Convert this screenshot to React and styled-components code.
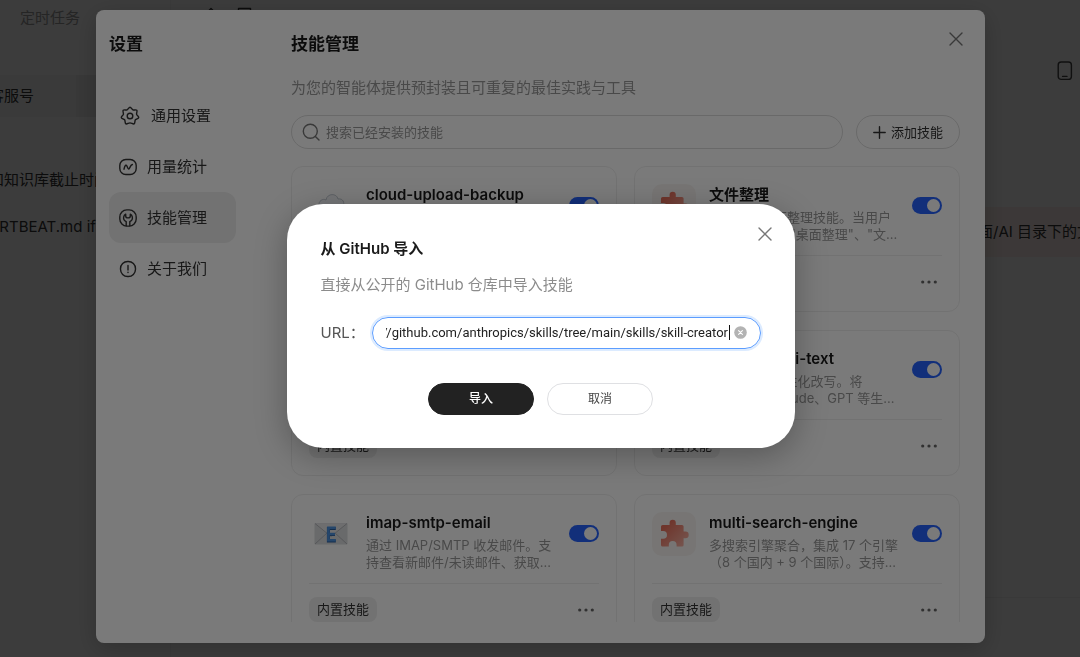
import React, { useLayoutEffect, useRef, useState } from "react";
import styled, { createGlobalStyle } from "styled-components";

const Global = createGlobalStyle`
  *, *::before, *::after { box-sizing: border-box; }
  html, body, #root { height: 100%; }
  body {
    margin: 0;
    overflow: hidden;
    background: #fafafa;
    color: #333;
    font-family: Inter, "Noto Sans CJK SC", sans-serif;
    font-size: 15px;
    line-height: 22px;
  }
  button, input { font: inherit; color: inherit; }
  button { cursor: pointer; padding: 0; border: 0; background: none; }
  h1, h2, h3, p, ul { margin: 0; padding: 0; }
  ul { list-style: none; }
`;

/* ---------- workspace behind the dialogs ---------- */

const Workspace = styled.div`
  display: flex;
  height: 100%;
  overflow: hidden;
`;

const TaskPane = styled.aside`
  flex: none;
  width: 171px;
  border-right: 1px solid #f0f0f0;
  overflow: hidden;
`;

const TaskLabel = styled.p`
  padding: 7px 20px 0;
  margin-bottom: 46px;
  color: #999;
`;

const ChatItem = styled.p`
  margin-left: -11px;
  height: 42px;
  line-height: 42px;
  white-space: nowrap;
  color: #333;
  background: ${(p) => (p.$active ? "linear-gradient(90deg, #f2f2f2 87px, #e8e8e8 87px)" : "none")};
  margin-bottom: ${(p) => p.$after || 0}px;
`;

const ChatPane = styled.main`
  flex: 1;
  min-width: 0;
  display: flex;
  flex-direction: column;
`;

const ChatTop = styled.div`
  display: flex;
  gap: 20px;
  height: 60px;
  padding: 7px 32px 0;
`;

const DeviceRow = styled.div`
  display: flex;
  justify-content: flex-end;
  height: 147px;
  padding-right: 7px;
  color: #444;
`;

const Bubble = styled.p`
  align-self: flex-end;
  width: 120px;
  height: 50px;
  padding-left: 18px;
  line-height: 50px;
  white-space: nowrap;
  overflow: hidden;
  background: #f8ebe8;
`;

const Composer = styled.div`
  margin-top: auto;
  height: 60px;
  border-top: 1px solid #eee;
`;

/* ---------- dialogs ---------- */

const Overlay = styled.div`
  position: fixed;
  inset: 0;
  display: flex;
  align-items: ${(p) => (p.$center ? "center" : "stretch")};
  justify-content: center;
  padding: ${(p) => (p.$center ? "10px 95px 16px 96px" : "10px 95px 14px 96px")};
  background: rgba(0, 0, 0, ${(p) => (p.$center ? 0.52 : 0.5)});
`;

const SettingsDialog = styled.section`
  position: relative;
  flex: 1;
  display: flex;
  min-width: 0;
  padding: 0 25px 21px 13px;
  border-radius: 8px;
  background: #fff;
  box-shadow: 0 6px 24px rgba(0, 0, 0, 0.2);
`;

const CloseButton = styled.button`
  position: absolute;
  top: ${(p) => p.$inset}px;
  right: ${(p) => p.$inset}px;
  display: flex;
  color: #777;
`;

const Side = styled.nav`
  flex: none;
  width: 127px;
  margin-right: 55px;
  padding-top: 23px;
`;

const Heading = styled.h1`
  font-size: 17px;
  line-height: 22px;
  font-weight: 600;
  color: #1a1a1a;
`;

const NavList = styled.ul`
  margin-top: 35px;
`;

const NavItem = styled.button`
  display: flex;
  align-items: center;
  gap: 10px;
  width: 100%;
  height: 51px;
  padding: 0 10px;
  border-radius: 12px;
  background: ${(p) => (p.$active ? "#efefef" : "none")};

  svg { flex: none; }
`;

const Content = styled.div`
  flex: 1;
  min-width: 0;
  display: flex;
  flex-direction: column;
  padding-top: 23px;
`;

const Lead = styled.p`
  margin-top: 22px;
  color: #999;
`;

const Tools = styled.div`
  display: flex;
  gap: 13px;
  margin: 16px 0 17px;
`;

const SearchBox = styled.label`
  flex: 1;
  display: flex;
  align-items: center;
  gap: 6px;
  height: 34px;
  padding: 0 10px;
  border: 1px solid #dcdcdc;
  border-radius: 17px;
  font-size: 13px;
  color: #777;

  input {
    flex: 1;
    min-width: 0;
    border: 0;
    padding: 0;
    outline: none;
    background: none;
  }
  input::placeholder { color: #999; opacity: 1; }
`;

const AddButton = styled.button`
  display: flex;
  align-items: center;
  justify-content: center;
  gap: 5px;
  width: 104px;
  height: 34px;
  border: 1px solid #dcdcdc;
  border-radius: 17px;
  font-size: 13px;
`;

const CardGrid = styled.div`
  flex: 1;
  min-height: 0;
  overflow: hidden;
  display: grid;
  grid-template-columns: repeat(2, minmax(0, 1fr));
  grid-auto-rows: 146px;
  gap: 18px 17px;
`;

const Card = styled.article`
  padding: 17px;
  border: 1px solid #efefef;
  border-radius: 12px;
`;

const CardTop = styled.div`
  display: flex;
  gap: 13px;
  height: 72px;
  border-bottom: 1px solid #efefef;

  svg { flex: none; }
`;

const CardText = styled.div`
  flex: 1;
  min-width: 0;
`;

const CardTitle = styled.h2`
  margin-bottom: 4px;
  font-size: 15px;
  line-height: 21px;
  font-weight: 600;
  color: #1a1a1a;
  white-space: nowrap;
`;

const CardLine = styled.p`
  font-size: 13px;
  line-height: 17px;
  color: #999;
  white-space: nowrap;
`;

const Switch = styled.input`
  appearance: none;
  flex: none;
  display: flex;
  align-items: center;
  width: 30px;
  height: 17px;
  margin: 13px 0 0;
  padding: 0 2px;
  border-radius: 9px;
  background: #bbb;

  &:checked {
    justify-content: flex-end;
    background: #2663ff;
  }
  &::before {
    content: "";
    width: 13px;
    height: 13px;
    border-radius: 50%;
    background: #fff;
  }
`;

const CardFoot = styled.div`
  display: flex;
  align-items: center;
  justify-content: space-between;
  margin-top: 13px;
  padding-right: 4px;
`;

const Tag = styled.span`
  height: 25px;
  padding: 0 8px;
  border-radius: 8px;
  font-size: 13px;
  line-height: 25px;
  background: #efefef;
`;

const MoreButton = styled.button`
  display: flex;
  color: #666;
`;

const ImportDialog = styled.form`
  position: relative;
  width: 508px;
  padding: 34px 34px 33px;
  border-radius: 36px;
  background: #fff;
  box-shadow: 0 8px 32px rgba(0, 0, 0, 0.28);
`;

const ImportTitle = styled.h3`
  margin-bottom: 14px;
  font-size: 15px;
  line-height: 22px;
  font-weight: 600;
  color: #1a1a1a;
`;

const Hint = styled.p`
  color: #8c8c8c;
`;

const Field = styled.div`
  display: flex;
  align-items: center;
  margin-top: 21px;

  label {
    flex: none;
    width: 51px;
    color: #555;
    white-space: nowrap;
  }
`;

const UrlBox = styled.div`
  flex: 1;
  min-width: 0;
  display: flex;
  align-items: center;
  height: 32px;
  padding: 0 13px;
  border: 1px solid #5c9dff;
  border-radius: 16px;
  box-shadow: 0 0 0 2px #dcebff;
  font-family: Roboto, "Noto Sans CJK SC", sans-serif;
  font-size: 13px;

  input {
    flex: 1;
    min-width: 0;
    height: 22px;
    padding: 0;
    border: 0;
    outline: none;
    background: none;
    color: #222;
    caret-color: transparent;
  }
`;

const Caret = styled.span`
  width: 1px;
  height: 15px;
  background: #111;
`;

const ClearButton = styled.button`
  display: flex;
  margin-left: 4px;
`;

const Actions = styled.div`
  display: flex;
  justify-content: center;
  gap: 13px;
  margin-top: 34px;
`;

const Action = styled.button`
  width: 106px;
  height: 32px;
  border: 1px solid ${(p) => (p.$primary ? "#222" : "#dfe0e3")};
  border-radius: 16px;
  background: ${(p) => (p.$primary ? "#222" : "#fff")};
  color: ${(p) => (p.$primary ? "#fff" : "#444")};
  font-size: 12px;
  font-weight: ${(p) => (p.$primary ? 500 : 400)};
`;

/* ---------- drawings ---------- */

const line = {
  fill: "none",
  stroke: "currentColor",
  strokeWidth: 1.4,
  strokeLinecap: "round",
  strokeLinejoin: "round",
};

const CloseIcon = () => (
  <svg width="14" height="14" viewBox="0 0 14 14" {...line}>
    <path d="M1 1l12 12M13 1L1 13" />
  </svg>
);

const GearIcon = () => (
  <svg width="22" height="22" viewBox="0 0 22 22" {...line}>
    <path d="M11 2.2 C12.2 2.2 12.6 4.3 13.9 4.9 C15.1 5.5 17.1 4.3 17.8 5.3 C18.6 6.2 17.3 7.9 17.6 9.3 C17.9 10.6 19.9 11.3 19.7 12.6 C19.4 13.8 17.3 13.7 16.4 14.8 C15.6 15.8 16.3 17.9 15.1 18.9 C14 19.4 12.4 17.9 11 17.9 C9.6 17.9 8 19.4 6.9 18.9 C5.7 17.9 6.4 15.8 5.6 14.8 C4.7 13.7 2.6 13.8 2.3 12.6 C2.1 11.3 4.1 10.6 4.4 9.3 C4.7 7.9 3.4 6.2 4.2 5.3 C4.9 4.3 6.9 5.5 8.1 4.9 C9.4 4.3 9.8 2.2 11 2.2 Z" />
    <circle cx="11" cy="11" r="2.8" />
  </svg>
);

const UsageIcon = () => (
  <svg width="18" height="18" viewBox="0 0 18 18" {...line}>
    <rect x="0.8" y="1.5" width="16.4" height="15" rx="6" />
    <path d="M5 11.2 C5.6 8.4 6.6 6.6 7.4 7.3 C8.3 8.1 8.7 11.4 9.8 11 C11 10.5 11 7.2 13.4 6.5" />
  </svg>
);

const SkillIcon = () => (
  <svg width="18" height="18" viewBox="0 0 18 18" {...line}>
    <rect x="0.8" y="0.9" width="16.4" height="16.2" rx="7" />
    <path d="M7.2 16.8 V12.6 C5.2 11.8 4.3 9.9 4.7 7.9 C5 6.6 5.8 5.7 6.7 5.2 V7 C6.7 8.1 7.8 8.9 9 8.9 C10.2 8.9 11.3 8.1 11.3 7 V5.2 C12.2 5.7 13 6.6 13.3 7.9 C13.7 9.9 12.8 11.8 10.8 12.6 V16.8" />
  </svg>
);

const AboutIcon = () => (
  <svg width="18" height="18" viewBox="0 0 18 18" {...line}>
    <rect x="1.5" y="1.5" width="15" height="15" rx="7.2" />
    <path d="M9 5.5v4.5M9 12.3v.2" />
  </svg>
);

const SearchIcon = () => (
  <svg width="18" height="18" viewBox="0 0 18 18" {...line}>
    <circle cx="8.3" cy="8.3" r="7" />
    <path d="M13.4 13.4L17 17" />
  </svg>
);

const PlusIcon = () => (
  <svg width="13" height="13" viewBox="0 0 13 13" {...line}>
    <path d="M6.5 .8v11.4M.8 6.5h11.4" />
  </svg>
);

const DotsIcon = () => (
  <svg width="18" height="6" viewBox="0 0 18 6" fill="currentColor">
    <circle cx="2.7" cy="3" r="1.6" />
    <circle cx="9" cy="3" r="1.6" />
    <circle cx="15.3" cy="3" r="1.6" />
  </svg>
);

const ClearIcon = () => (
  <svg width="13" height="13" viewBox="0 0 13 13">
    <circle cx="6.5" cy="6.5" r="6.3" fill="#b3b3b3" />
    <path d="M4.6 4.6l3.8 3.8M8.4 4.6L4.6 8.4" stroke="#fff" strokeWidth="1.1" strokeLinecap="round" />
  </svg>
);

const PhoneIcon = () => (
  <svg width="16" height="22" viewBox="0 0 16 22" {...line}>
    <rect x="1.2" y="2" width="13.2" height="17.4" rx="3" />
    <path d="M5.6 16.4h4.4" />
  </svg>
);

const TopIcons = () => (
  <svg width="60" height="18" viewBox="0 0 60 18" {...line}>
    <path d="M4 5.5L8 1.5l4 4M35.5 1.5h12v12h-12z" />
  </svg>
);

const PuzzleIcon = () => (
  <svg width="44" height="44" viewBox="0 0 44 44">
    <defs>
      <linearGradient id="puzzle" x1="0" y1="0" x2="1" y2="1">
        <stop offset="0.2" stopColor="#e8705c" />
        <stop offset="1" stopColor="#f7b9ac" />
      </linearGradient>
    </defs>
    <rect width="44" height="44" rx="10" fill="#f8f5f2" />
    <path
      fill="url(#puzzle)"
      d="M10.6 13 H17.6 V10.8 A3.1 3.1 0 0 1 23.8 10.8 V13 H30 A1.6 1.6 0 0 1 31.6 14.6 V19.6 H33.4 A3.3 3.3 0 0 1 33.4 26.2 H31.6 V32.9 A1.6 1.6 0 0 1 30 34.5 H24.6 V33 A3.9 3.9 0 0 0 16.8 33 V34.5 H10.6 A1.6 1.6 0 0 1 9 32.9 V26.7 H11.2 A3.8 3.8 0 0 0 11.2 19.1 H9 V14.6 A1.6 1.6 0 0 1 10.6 13 Z"
    />
  </svg>
);

const MailIcon = () => (
  <svg width="44" height="44" viewBox="0 0 44 44">
    <rect x="5.5" y="11" width="33" height="21.5" rx="1" fill="#dcdde0" />
    <path d="M6 11.5l16 13 16-13z" fill="#e6e7e9" />
    <path d="M6 11.5l16 13 16-13M6 32l12-11M38 32L26 21" fill="none" stroke="#b0b2b7" strokeWidth="0.9" />
    <path d="M26.8 16.5h-7.4v12.4h7.4M19.4 22.6h6.6" fill="none" stroke="#2c5f9e" strokeWidth="3" />
    <path d="M26.8 15.8h-7.4v12.4h7.4M19.4 22h6.6" fill="none" stroke="#4f93e0" strokeWidth="2.6" />
  </svg>
);

const CloudIcon = () => (
  <svg width="44" height="44" viewBox="0 0 44 44">
    <path
      d="M12 31 C6 31 5 24 10 22 C9 17 14 14 17 16 C18 9 28 9 29 15 C34 14 36 19 34 22 C39 24 38 31 32 31 Z"
      fill="#f3f5f8"
      stroke="#c4cad2"
      strokeWidth="1"
    />
  </svg>
);

/* ---------- data ---------- */

const NAV = [
  { label: "通用设置", Icon: GearIcon },
  { label: "用量统计", Icon: UsageIcon },
  { label: "技能管理", Icon: SkillIcon, active: true },
  { label: "关于我们", Icon: AboutIcon },
];

const SKILLS = [
  { title: "cloud-upload-backup", Icon: CloudIcon, lines: ["上传备份文件到云端。支持", "生成分享链接、下载文件..."] },
  { title: "文件整理", Icon: PuzzleIcon, lines: ["智能文件桌面整理技能。当用户", '提到 "整理"、"桌面整理"、"文...'] },
  { title: "file-skill", Icon: PuzzleIcon, lines: ["查找本地文件内容。支持", "按名称与类型筛选..."] },
  { title: "humanize-ai-text", Icon: PuzzleIcon, lines: ["对 AI 文本 人性化改写。将", "ChatGPT, Claude、GPT 等生..."] },
  { title: "imap-smtp-email", Icon: MailIcon, lines: ["通过 IMAP/SMTP 收发邮件。支", "持查看新邮件/未读邮件、获取..."] },
  { title: "multi-search-engine", Icon: PuzzleIcon, lines: ["多搜索引擎聚合，集成 17 个引擎", "（8 个国内 + 9 个国际）。支持..."] },
];

const SkillCard = ({ title, Icon, lines }) => (
  <Card>
    <CardTop>
      <Icon />
      <CardText>
        <CardTitle>{title}</CardTitle>
        {lines.map((text) => (
          <CardLine key={text}>{text}</CardLine>
        ))}
      </CardText>
      <Switch type="checkbox" role="switch" defaultChecked aria-label={title} />
    </CardTop>
    <CardFoot>
      <Tag>内置技能</Tag>
      <MoreButton type="button" aria-label="更多">
        <DotsIcon />
      </MoreButton>
    </CardFoot>
  </Card>
);

export default function App() {
  const urlRef = useRef(null);
  const [url, setUrl] = useState("https://github.com/anthropics/skills/tree/main/skills/skill-creator");

  useLayoutEffect(() => {
    const input = urlRef.current;
    const toEnd = () => {
      input.scrollLeft = input.scrollWidth;
    };
    input.focus();
    input.setSelectionRange(input.value.length, input.value.length);
    toEnd();
    document.fonts.ready.then(toEnd);
  }, []);

  return (
    <>
      <Global />
      <Workspace>
        <TaskPane>
          <TaskLabel>定时任务</TaskLabel>
          <ChatItem $active $after={42}>客服号</ChatItem>
          <ChatItem $after={5}>和知识库截止时间</ChatItem>
          <ChatItem>ARTBEAT.md if</ChatItem>
        </TaskPane>
        <ChatPane>
          <ChatTop>
            <TopIcons />
          </ChatTop>
          <DeviceRow>
            <PhoneIcon />
          </DeviceRow>
          <Bubble>面/AI 目录下的文件</Bubble>
          <Composer />
        </ChatPane>
      </Workspace>

      <Overlay>
        <SettingsDialog aria-label="设置">
          <Side>
            <Heading>设置</Heading>
            <NavList>
              {NAV.map(({ label, Icon, active }) => (
                <li key={label}>
                  <NavItem type="button" $active={active}>
                    <Icon />
                    {label}
                  </NavItem>
                </li>
              ))}
            </NavList>
          </Side>
          <Content>
            <Heading as="h2">技能管理</Heading>
            <Lead>为您的智能体提供预封装且可重复的最佳实践与工具</Lead>
            <Tools>
              <SearchBox>
                <SearchIcon />
                <input type="text" placeholder="搜索已经安装的技能" aria-label="搜索已经安装的技能" />
              </SearchBox>
              <AddButton type="button">
                <PlusIcon />
                添加技能
              </AddButton>
            </Tools>
            <CardGrid>
              {SKILLS.map((skill) => (
                <SkillCard key={skill.title} {...skill} />
              ))}
            </CardGrid>
          </Content>
          <CloseButton type="button" aria-label="关闭" $inset={22}>
            <CloseIcon />
          </CloseButton>
        </SettingsDialog>
      </Overlay>

      <Overlay $center>
        <ImportDialog onSubmit={(e) => e.preventDefault()}>
          <ImportTitle>从 GitHub 导入</ImportTitle>
          <Hint>直接从公开的 GitHub 仓库中导入技能</Hint>
          <Field>
            <label htmlFor="url">URL：</label>
            <UrlBox>
              <input id="url" type="text" ref={urlRef} value={url} onChange={(e) => setUrl(e.target.value)} />
              <Caret />
              <ClearButton type="button" aria-label="清除" onClick={() => setUrl("")}>
                <ClearIcon />
              </ClearButton>
            </UrlBox>
          </Field>
          <Actions>
            <Action type="submit" $primary>
              导入
            </Action>
            <Action type="button">取消</Action>
          </Actions>
          <CloseButton type="button" aria-label="关闭" $inset={23}>
            <CloseIcon />
          </CloseButton>
        </ImportDialog>
      </Overlay>
    </>
  );
}
